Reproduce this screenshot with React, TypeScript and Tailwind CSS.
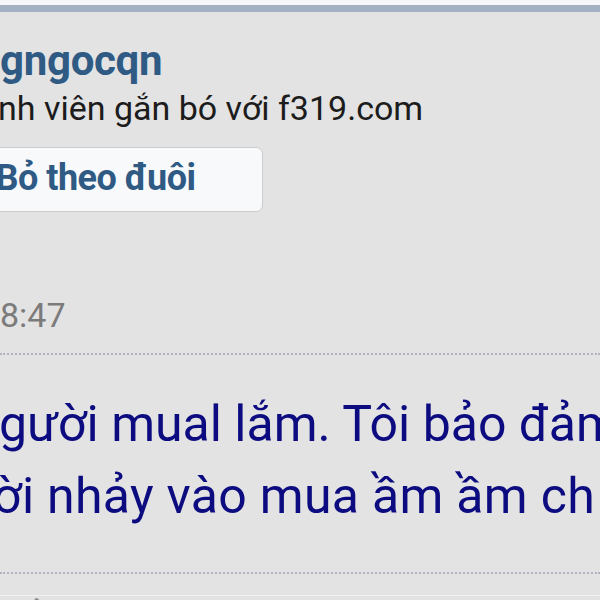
import { ThumbsUp, Reply } from 'lucide-react';

const font = { fontFamily: 'Roboto, "Noto Sans", sans-serif' };

export default function App() {
  return (
    <div className="h-[600px] w-[600px] overflow-hidden bg-[#e3e3e3]" style={font}>
      <div className="h-[5px] bg-[#f7f7fa]" />
      <div className="h-[7px] bg-[#a4b1c2]" />

      <div className="mt-[25px] flex flex-col whitespace-nowrap">
        <div className="text-[42px] font-bold leading-[48px] tracking-[-0.3px] text-[#2f5a84]">gngocqn</div>
        <div className="ml-[-2px] mt-[3px] text-[34px] leading-[41px] text-[#1c1c1c]">
          nh viên gắn bó với f319.com
        </div>

        <div className="mt-[18px] flex">
          <button className="ml-[-72px] w-[335px] rounded-[7px] border border-[#cdcdcd] bg-[#f8f9fa] pt-[10px] pb-[12px] text-center text-[36px] font-bold leading-[41px] tracking-[-0.5px] text-[#2f5a84]">
            Bỏ theo đuôi
          </button>
        </div>

        <div className="mt-[83px] text-[34px] leading-[41px] text-[#7b7b7b]">8:47</div>
      </div>

      <div className="mt-[17px] border-t-2 border-dotted border-[#b0b4c0]" />

      <div className="mt-[33px] whitespace-nowrap text-[50px] leading-[72px] text-[#0c0c80]">
        <div className="ml-[-1px]">gười mual lắm. Tôi bảo đảm</div>
        <div className="ml-[-7px] tracking-[0.3px]">ời nhảy vào mua ầm ầm ch</div>
      </div>

      <div className="mt-[40px] border-t-2 border-dotted border-[#b0b4c0]" />

      <div className="mt-[21px] flex items-start border-t border-[#f1f1f1] pt-[1px] text-[#8a8a8a]">
        <div className="ml-[25px]">
          <ThumbsUp size={22} />
        </div>
        <div className="ml-[205px]">
          <Reply size={22} />
        </div>
      </div>
    </div>
  );
}
